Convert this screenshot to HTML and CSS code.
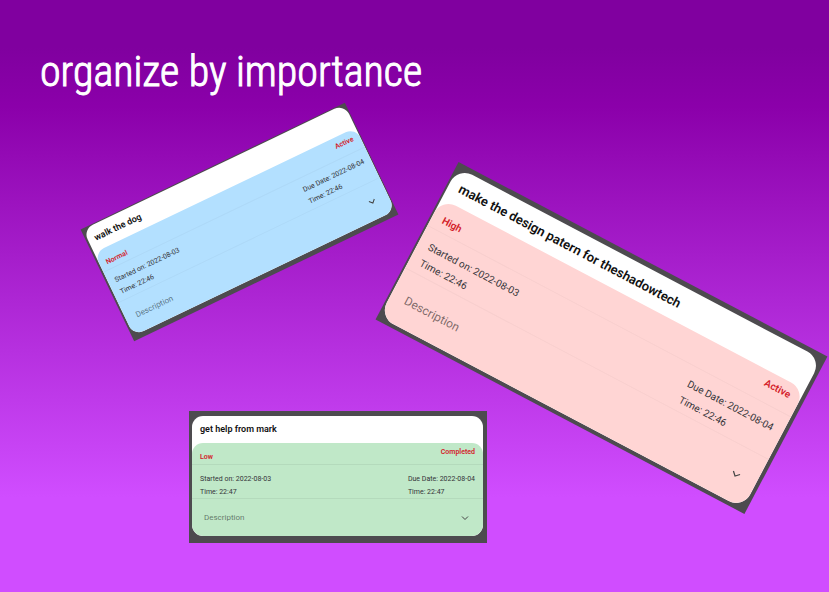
FILE: index.html
```html
<!DOCTYPE html>
<html lang="en">
<head>
<meta charset="utf-8">
<meta name="viewport" content="width=device-width, initial-scale=1">
<title>Organize by importance</title>
<link rel="stylesheet" href="styles.css">
</head>
<body>
<main class="canvas">
  <h1 class="headline">organize by importance</h1>

  <article class="frame frame-normal">
    <div class="card">
      <h2 class="title">walk the dog</h2>
      <div class="body">
        <div class="status"><span class="priority">Normal</span><span>Active</span></div>
        <div class="dates">
          <p>Started on: 2022-08-03<br>Time: 22:46</p>
          <p>Due Date: 2022-08-04<br>Time: 22:46</p>
        </div>
        <button class="more" type="button" aria-expanded="false">Description
          <svg class="chevron" viewBox="0 0 8 8" aria-hidden="true"><path d="M1 2.5 4 5.5 7 2.5"/></svg>
        </button>
      </div>
    </div>
  </article>

  <article class="frame frame-high">
    <div class="card">
      <h2 class="title">make the design patern for theshadowtech</h2>
      <div class="body">
        <div class="status"><span class="priority">High</span><span>Active</span></div>
        <div class="dates">
          <p>Started on: 2022-08-03<br>Time: 22:46</p>
          <p>Due Date: 2022-08-04<br>Time: 22:46</p>
        </div>
        <button class="more" type="button" aria-expanded="false">Description
          <svg class="chevron" viewBox="0 0 8 8" aria-hidden="true"><path d="M1 2.5 4 5.5 7 2.5"/></svg>
        </button>
      </div>
    </div>
  </article>

  <article class="frame frame-low">
    <div class="card">
      <h2 class="title">get help from mark</h2>
      <div class="body">
        <div class="status"><span class="priority">Low</span><span>Completed</span></div>
        <div class="dates">
          <p>Started on: 2022-08-03<br>Time: 22:47</p>
          <p>Due Date: 2022-08-04<br>Time: 22:47</p>
        </div>
        <button class="more" type="button" aria-expanded="false">Description
          <svg class="chevron" viewBox="0 0 8 8" aria-hidden="true"><path d="M1 2.5 4 5.5 7 2.5"/></svg>
        </button>
      </div>
    </div>
  </article>
</main>
</body>
</html>
```

FILE: styles.css
```css
* { box-sizing: border-box; }

body {
  margin: 0;
  font-family: Roboto, "Liberation Sans", sans-serif;
}

.canvas {
  position: relative;
  min-height: 100vh;
  overflow: hidden;
  background: linear-gradient(#80009f 0%, #80009f 8%, #8b00aa 18%, #d04dff 84%, #d04dff 100%);
}

.headline {
  margin: 0;
  padding: 44px 40px 0;
  color: #fff;
  font-family: "Roboto Condensed", "Liberation Sans Narrow", "Open Sans Condensed", "DejaVu Sans Condensed", sans-serif;
  font-size: 42px;
  font-weight: 300;
  line-height: 56px;
  white-space: nowrap;
  -webkit-text-stroke: 1px #fff;
}

/* Task cards lie freely on the canvas; each sets its own scale. */
.frame {
  --title: 9px;
  --label: 7px;
  --text: 7px;
  --more: 8px;
  --head: 26px;
  --status: 22px;
  --dates: 34px;
  --line: 13px;
  --inset: 8px;
  --drop: 5px;
  --lead: 8px;
  --radius: 11px;
  --icon: 8px;
  --rule: rgb(0 0 0 / 3%);
  position: absolute;
  display: flex;
  background: #4d4b4f;
}

.frame-normal {
  left: 93px;
  top: 160px;
  width: 293px;
  height: 124px;
  padding: 1px 1px 5px 2px;
  --inset: 7px;
  --lead: 5px;
  --tint: #b3e0ff;
  transform: rotate(-25.6deg);
}

.frame-high {
  --title: 13px;
  --label: 10px;
  --text: 10px;
  --more: 12px;
  --head: 35px;
  --status: 31px;
  --dates: 48px;
  --line: 18px;
  --inset: 11px;
  --drop: 7px;
  --lead: 7px;
  --radius: 16px;
  --icon: 10px;
  left: 393px;
  top: 249px;
  width: 417px;
  height: 178px;
  padding: 5px 4px 4px 2px;
  --tint: #ffd5d4;
  transform: rotate(27.8deg);
}

.frame-low {
  left: 189px;
  top: 411px;
  width: 298px;
  height: 132px;
  padding: 5px 4px 7px 3px;
  --head: 27px;
  --rule: rgb(0 0 0 / 6%);
  --tint: #c0e8c8;
}

.card {
  flex: 1;
  display: flex;
  flex-direction: column;
  overflow: hidden;
  border-radius: var(--radius);
  background: #fff;
}

.title {
  margin: 0;
  padding: 0 var(--inset);
  color: #111;
  font-size: var(--title);
  font-weight: 600;
  line-height: var(--head);
}

.body {
  flex: 1;
  display: flex;
  flex-direction: column;
  border-radius: var(--radius);
  background: var(--tint);
}

.status,
.dates {
  display: flex;
  justify-content: space-between;
  padding: 0 var(--inset);
  border-bottom: 1px solid var(--rule);
}

.status {
  height: var(--status);
  padding-top: var(--drop);
  color: #d32029;
  font-size: var(--label);
  font-weight: 600;
  line-height: 9px;
}

.priority { padding-top: var(--drop); }

.dates {
  height: var(--dates);
  align-items: center;
  padding-top: var(--lead);
  color: #343438;
  font-size: var(--text);
  line-height: var(--line);
}

.dates p { margin: 0; }

.more {
  flex: 1;
  display: flex;
  align-items: center;
  justify-content: space-between;
  padding: 0 calc(var(--inset) + 6px) 0 calc(var(--inset) + 4px);
  border: 0;
  background: none;
  color: rgb(0 0 0 / 52%);
  font-family: inherit;
  font-size: var(--more);
}

.chevron {
  width: var(--icon);
  height: var(--icon);
  fill: none;
  stroke: #444;
  stroke-width: 1;
}
```
